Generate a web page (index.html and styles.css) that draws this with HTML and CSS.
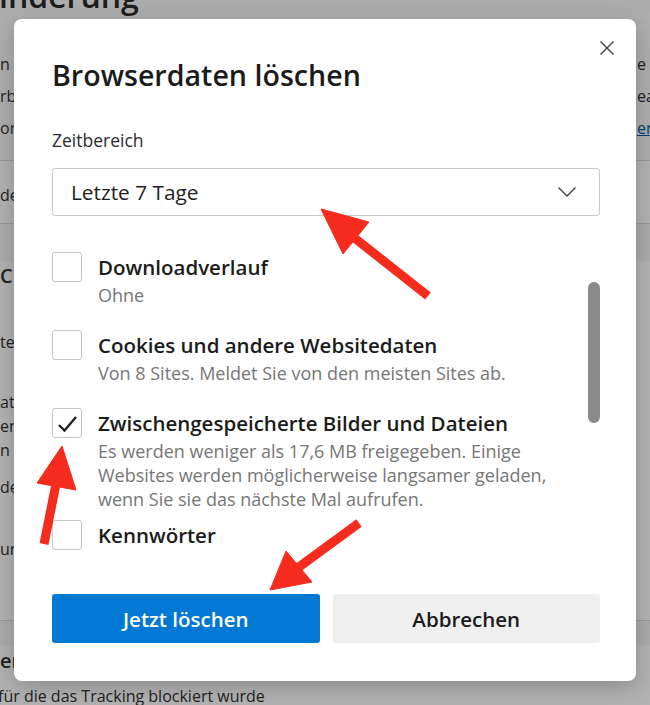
FILE: index.html
```html
<!DOCTYPE html>
<html lang="de">
<head>
<meta charset="utf-8">
<title>Browserdaten löschen</title>
<link rel="stylesheet" href="styles.css">
</head>
<body>
<div class="page">
  <h1 class="page-title">inderung</h1>
  <div class="band">
    <div class="row"><span class="l">n</span><span class="r">e</span></div>
    <div class="row"><span class="l">rb</span><span class="r">ea</span></div>
    <div class="row"><span class="l">or</span><span class="r link">er</span></div>
  </div>
  <div class="section s1">
    <div class="row medium"><span class="l">de</span></div>
  </div>
  <div class="section s2">
    <div class="row heading h1"><span class="l">C</span></div>
    <div class="row t1"><span class="l">te</span></div>
    <div class="row t2"><span class="l">ati</span></div>
    <div class="row"><span class="l">en</span></div>
    <div class="row"><span class="l">n p</span></div>
    <div class="row t3"><span class="l">de</span></div>
    <div class="row t4"><span class="l">un</span></div>
  </div>
  <div class="section s3">
    <div class="row heading h2"><span class="l">er</span></div>
    <div class="row t5"><span class="full">für die das Tracking blockiert wurde</span></div>
  </div>
</div>

<div class="overlay"></div>

<div class="dialog">
  <button class="close" aria-label="Schließen">
    <svg width="14" height="14" viewBox="0 0 14 14"><path d="M0.5 0.5 L13.5 13.5 M13.5 0.5 L0.5 13.5" stroke="#3a3a3a" stroke-width="1.3" fill="none"/></svg>
  </button>
  <h2 class="title">Browserdaten löschen</h2>
  <div class="field-label">Zeitbereich</div>
  <div class="select">
    <span>Letzte 7 Tage</span>
    <svg class="chev" width="18" height="10" viewBox="0 0 18 10"><path d="M0.5 0.5 L9 9 L17.5 0.5" stroke="#3a3a3a" stroke-width="1.3" fill="none"/></svg>
  </div>
  <div class="list">
    <div class="items">
      <div class="item">
        <div class="box"></div>
        <div class="text">
          <div class="label">Downloadverlauf</div>
          <div class="desc">Ohne</div>
        </div>
      </div>
      <div class="item">
        <div class="box"></div>
        <div class="text">
          <div class="label">Cookies und andere Websitedaten</div>
          <div class="desc">Von 8 Sites. Meldet Sie von den meisten Sites ab.</div>
        </div>
      </div>
      <div class="item item-long">
        <div class="box checked">
          <svg width="28" height="28" viewBox="0 0 28 28"><path d="M6 16 L11.5 21.5 L23 8" stroke="#1f1f1f" stroke-width="2.3" fill="none"/></svg>
        </div>
        <div class="text">
          <div class="label">Zwischengespeicherte Bilder und Dateien</div>
          <div class="desc">Es werden weniger als 17,6 MB freigegeben. Einige<br>Websites werden möglicherweise langsamer geladen,<br>wenn Sie sie das nächste Mal aufrufen.</div>
        </div>
      </div>
      <div class="item">
        <div class="box"></div>
        <div class="text">
          <div class="label">Kennwörter</div>
          <div class="desc">Keine</div>
        </div>
      </div>
    </div>
    <div class="track"><div class="thumb"></div></div>
  </div>
  <div class="actions">
    <button class="btn primary">Jetzt löschen</button>
    <button class="btn secondary">Abbrechen</button>
  </div>
</div>

<svg class="arrows" width="650" height="705" viewBox="0 0 650 705">
  <g fill="#f42b1d" stroke="#f42b1d">
    <line x1="352" y1="236" x2="428" y2="296" stroke-width="9" stroke-linecap="butt"/>
    <polygon points="321,209 369,222 343,254" stroke-width="1"/>
    <line x1="56" y1="484" x2="44" y2="544" stroke-width="9"/>
    <polygon points="62,446 37,483 76,490" stroke-width="1"/>
    <line x1="299" y1="567" x2="359" y2="523" stroke-width="9"/>
    <polygon points="270,590 286,551 312,582" stroke-width="1"/>
  </g>
</svg>
</body>
</html>
```

FILE: styles.css
```css
html, body {
  margin: 0;
  padding: 0;
}
body {
  width: 650px;
  height: 705px;
  overflow: hidden;
  position: relative;
  background: #f6f6f6;
  font-family: "Open Sans", "Noto Sans", sans-serif;
  color: #323232;
}

/* background page */
.page {
  white-space: nowrap;
}
.page-title {
  margin: -20px 0 0 -1px;
  font-size: 32px;
  line-height: 32px;
  font-weight: 600;
  color: #2a2a2a;
}
.row {
  display: flex;
  font-size: 16px;
  line-height: 32px;
}
.row .l {
  width: 637px;
  overflow: hidden;
  flex-shrink: 0;
}
.row .r {
  flex: 1;
}
.row .link {
  color: #0a5fa8;
  text-decoration: underline;
}
.band {
  background: #f9f9f9;
  padding: 36px 0 16px;
  border-bottom: 1px solid #dcdcdc;
}
.section {
  border-bottom: 1px solid #dcdcdc;
}
.s1 {
  padding: 18px 0 12px;
  background: #ffffff;
}
.s1 .row {
  font-weight: 500;
}
.s2 {
  padding: 0 0 59px;
  background: #ffffff;
}
.s3 {
  border-bottom: none;
  background: #ffffff;
}
.heading {
  font-size: 20px;
  font-weight: 600;
  line-height: 30px;
}
.h1 { margin-top: 37px; }
.h2 { margin-top: 25px; }
.s2 .row:not(.heading) { line-height: 24px; }
.t1 { margin-top: 39px; }
.t2 { margin-top: 36px; }
.t3 { margin-top: 13px; }
.t4 { margin-top: 38px; }
.t5 { margin-top: 8px; line-height: 24px; }
.full { margin-left: -2px; }

.overlay {
  position: absolute;
  inset: 0;
  background: rgba(0, 0, 0, 0.3);
}

/* dialog */
.dialog {
  position: absolute;
  left: 14px;
  top: 19px;
  width: 622px;
  height: 662px;
  box-sizing: border-box;
  padding: 38px 36px 0 38px;
  background: #ffffff;
  border-radius: 8px;
  box-shadow: 0 6px 22px rgba(0, 0, 0, 0.22);
  color: #1b1b1b;
}
.close {
  position: absolute;
  left: 586px;
  top: 22px;
  width: 14px;
  height: 14px;
  padding: 0;
  border: none;
  background: none;
  display: block;
}
.close svg { display: block; }
.title {
  margin: 0;
  font-size: 28.6px;
  line-height: 36px;
  font-weight: 600;
  color: #1b1b1b;
}
.field-label {
  margin-top: 35px;
  font-size: 17.5px;
  line-height: 24px;
  color: #2b2b2b;
}
.select {
  margin-top: 16px;
  height: 48px;
  box-sizing: border-box;
  border: 1px solid #c8c8c8;
  border-radius: 3px;
  padding: 0 23px 0 18px;
  display: flex;
  align-items: center;
  justify-content: space-between;
  font-size: 20.8px;
  color: #1f1f1f;
}
.chev { display: block; }

.list {
  margin-top: 36px;
  height: 301px;
  overflow: hidden;
  display: flex;
}
.items {
  flex: 1;
}
.item {
  display: flex;
  gap: 16px;
  margin-bottom: 23px;
}
.item-long {
  margin-bottom: 9px;
}
.box {
  width: 30px;
  height: 30px;
  box-sizing: border-box;
  border: 1px solid #c4c4c4;
  border-radius: 3px;
  flex-shrink: 0;
}
.box svg { display: block; }
.label {
  font-size: 20.5px;
  line-height: 30px;
  font-weight: 600;
  color: #1b1b1b;
}
.desc {
  margin-top: 1px;
  font-size: 18px;
  line-height: 24px;
  color: #767676;
}
.track {
  width: 12px;
  flex-shrink: 0;
}
.thumb {
  margin-top: 30px;
  height: 141px;
  border-radius: 6px;
  background: #8a8a8a;
}

.actions {
  margin-top: 41px;
  display: flex;
  gap: 13px;
}
.btn {
  flex: 1;
  height: 49px;
  border: none;
  border-radius: 3px;
  font-family: "Open Sans", "Noto Sans", sans-serif;
  font-size: 20.5px;
  font-weight: 600;
}
.primary {
  background: #0078d4;
  color: #ffffff;
}
.secondary {
  background: #efefef;
  color: #1b1b1b;
}

.arrows {
  position: absolute;
  left: 0;
  top: 0;
  pointer-events: none;
}
```
